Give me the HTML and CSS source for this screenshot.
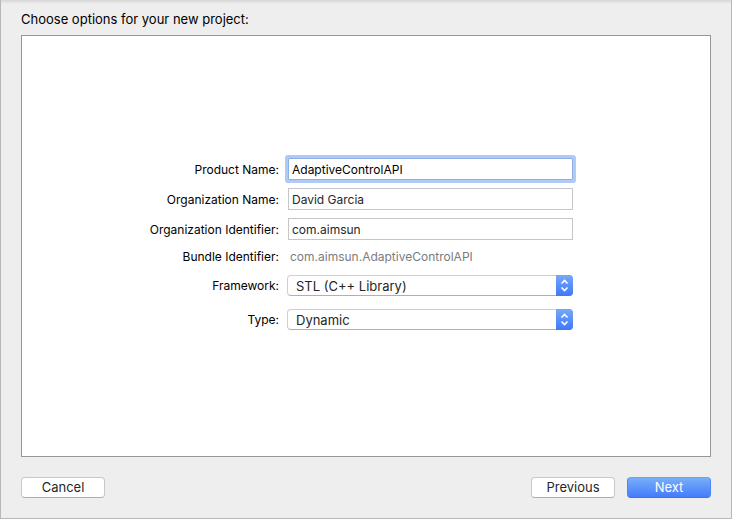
FILE: index.html
```html
<!DOCTYPE html>
<html lang="en">
<head>
  <meta charset="UTF-8" />
  <meta name="viewport" content="width=device-width, initial-scale=1.0"/>
  <title>New Project</title>
  <link rel="stylesheet" href="styles.css">
</head>
<body>
  <form class="sheet">
    <h1>Choose options for your new project:</h1>

    <div class="panel">
      <div class="row">
        <label for="product">Product Name:</label>
        <input type="text" id="product" class="active" value="AdaptiveControlAPI" />
      </div>
      <div class="row">
        <label for="organization">Organization Name:</label>
        <input type="text" id="organization" value="David Garcia" />
      </div>
      <div class="row">
        <label for="identifier">Organization Identifier:</label>
        <input type="text" id="identifier" value="com.aimsun" />
      </div>
      <div class="row row-static">
        <label for="bundle">Bundle Identifier:</label>
        <output id="bundle">com.aimsun.AdaptiveControlAPI</output>
      </div>
      <div class="row row-popup">
        <label for="framework">Framework:</label>
        <div class="popup">
          <select id="framework">
            <option>STL (C++ Library)</option>
            <option>None</option>
          </select>
          <span class="cap">
            <svg width="17" height="21" viewBox="0 0 17 21">
              <path d="M5.5 8.5L8.5 5.5L11.5 8.5M5.5 12.5L8.5 15.5L11.5 12.5"/>
            </svg>
          </span>
        </div>
      </div>
      <div class="row row-popup">
        <label for="type">Type:</label>
        <div class="popup">
          <select id="type">
            <option>Dynamic</option>
            <option>Static</option>
          </select>
          <span class="cap">
            <svg width="17" height="21" viewBox="0 0 17 21">
              <path d="M5.5 8.5L8.5 5.5L11.5 8.5M5.5 12.5L8.5 15.5L11.5 12.5"/>
            </svg>
          </span>
        </div>
      </div>
    </div>

    <div class="actions">
      <button type="button" class="cancel">Cancel</button>
      <button type="button">Previous</button>
      <button type="submit" class="primary">Next</button>
    </div>
  </form>
</body>
</html>
```

FILE: styles.css
```css
* {
  box-sizing: border-box;
}
body {
  margin: 0;
  font-family: Inter, "Liberation Sans", sans-serif;
  font-size: 12px;
  color: #000;
}
.sheet {
  display: flex;
  flex-direction: column;
  min-height: 100vh;
  padding: 11px 20px 20px;
  background: linear-gradient(#d6d6d6, #eee 4px);
  border: 1px solid #b8b8b8;
  border-top: 0;
}
h1 {
  margin: 0 0 8px;
  font-size: 13px;
  font-weight: 400;
  line-height: 16px;
}
.panel {
  flex: 1;
  display: flex;
  flex-direction: column;
  gap: 8px;
  padding: 122px 137px 20px 0;
  background: #fff;
  border: 1px solid #979797;
}
.row {
  display: grid;
  grid-template-columns: 257px 1fr;
  column-gap: 9px;
  line-height: 24px;
  height: 22px;
}
label {
  text-align: right;
}
input {
  width: 100%;
  height: 22px;
  padding: 2px 3px 0;
  border: 1px solid #c6c6c6;
  font: inherit;
  color: #262626;
  background: #fff;
}
input:focus {
  outline: none;
}
input.active {
  color: #000;
  border-color: #8dafe6;
  border-radius: 1px;
  box-shadow: 0 0 0 3px #b0caf8;
}
.row-static {
  height: 19px;
  line-height: 18px;
}
output {
  padding-left: 2px;
  color: #7c7c7c;
}
.row-popup {
  height: 26px;
  line-height: 21px;
}
.popup {
  position: relative;
  height: 21px;
  margin-left: -1px;
}
select {
  appearance: none;
  width: 100%;
  height: 21px;
  padding: 0 24px 1px 8px;
  border: 1px solid #cfcfcf;
  border-bottom-color: #b0b0b0;
  border-radius: 4px;
  font: inherit;
  font-size: 13px;
  color: #262626;
  background: #fff;
}
.cap {
  position: absolute;
  top: 0;
  right: 0;
  width: 17px;
  height: 21px;
  border-radius: 0 4px 4px 0;
  background: linear-gradient(#74a9f8, #3f78fb);
  pointer-events: none;
}
.cap svg {
  display: block;
  fill: none;
  stroke: #fff;
  stroke-width: 1.6;
}
.actions {
  display: flex;
  gap: 12px;
  padding-top: 20px;
}
button {
  width: 84px;
  height: 21px;
  padding: 0;
  border: 1px solid #c8c8c8;
  border-bottom-color: #aeaeae;
  border-radius: 4px;
  font: inherit;
  font-size: 13px;
  line-height: 19px;
  color: #262626;
  background: #fff;
}
.cancel {
  margin-right: auto;
}
.primary {
  color: #fff;
  border-color: #6ea2f6 #4f86f7 #3d6ff0;
  background: linear-gradient(#79aef9, #437cfb);
}
```
